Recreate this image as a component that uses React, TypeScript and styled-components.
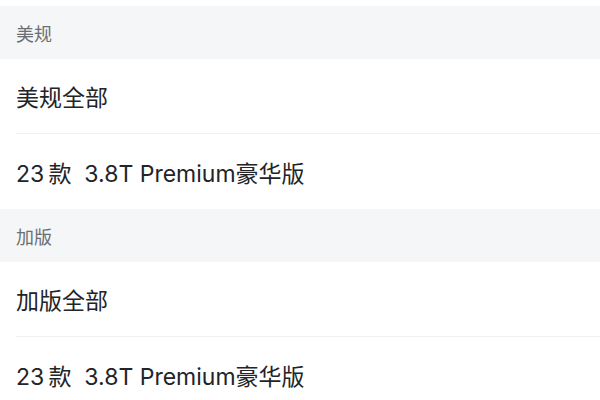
import * as React from 'react'
import styled, { createGlobalStyle } from 'styled-components'

const GlobalStyle = createGlobalStyle`
	html, body {
		margin: 0;
		padding: 0;
		background: #ffffff;
	}
	body {
		font-family: 'Inter', 'Noto Sans CJK SC', sans-serif;
		-webkit-font-smoothing: antialiased;
	}
`

interface IGroup {
	title: string
	items: string[]
}

// thin space mimics the auto CJK/latin spacing of the original
const GROUPS: IGroup[] = [
	{ title: '美规', items: ['美规全部', '23\u2009款  3.8T Premium豪华版'] },
	{ title: '加版', items: ['加版全部', '23\u2009款  3.8T Premium豪华版'] },
]

const Page = styled.div`
	width: 600px;
	height: 400px;
	overflow: hidden;
	padding-top: 6px;
	box-sizing: border-box;
	background: #ffffff;
`

const GroupHeader = styled.div`
	height: 53px;
	display: flex;
	align-items: center;
	padding: 1px 16px 0;
	box-sizing: border-box;
	background: #f5f6f7;
	color: #6b6e73;
	font-size: 18px;
`

const List = styled.ul`
	margin: 0;
	padding: 0 0 0 16px;
	list-style: none;
`

const Item = styled.li<{ $last: boolean }>`
	height: 75px;
	display: flex;
	align-items: center;
	box-sizing: border-box;
	border-bottom: ${p => (p.$last ? 'none' : '1px solid #f0f1f2')};
	color: #222427;
	font-size: 23px;
	white-space: pre;
`

const App = () => (
	<Page>
		<GlobalStyle />
		{GROUPS.map(group => (
			<section key={group.title}>
				<GroupHeader>{group.title}</GroupHeader>
				<List>
					{group.items.map((item, i) => (
						<Item key={item + i} $last={i === group.items.length - 1}>
							{item}
						</Item>
					))}
				</List>
			</section>
		))}
	</Page>
)

export default App
